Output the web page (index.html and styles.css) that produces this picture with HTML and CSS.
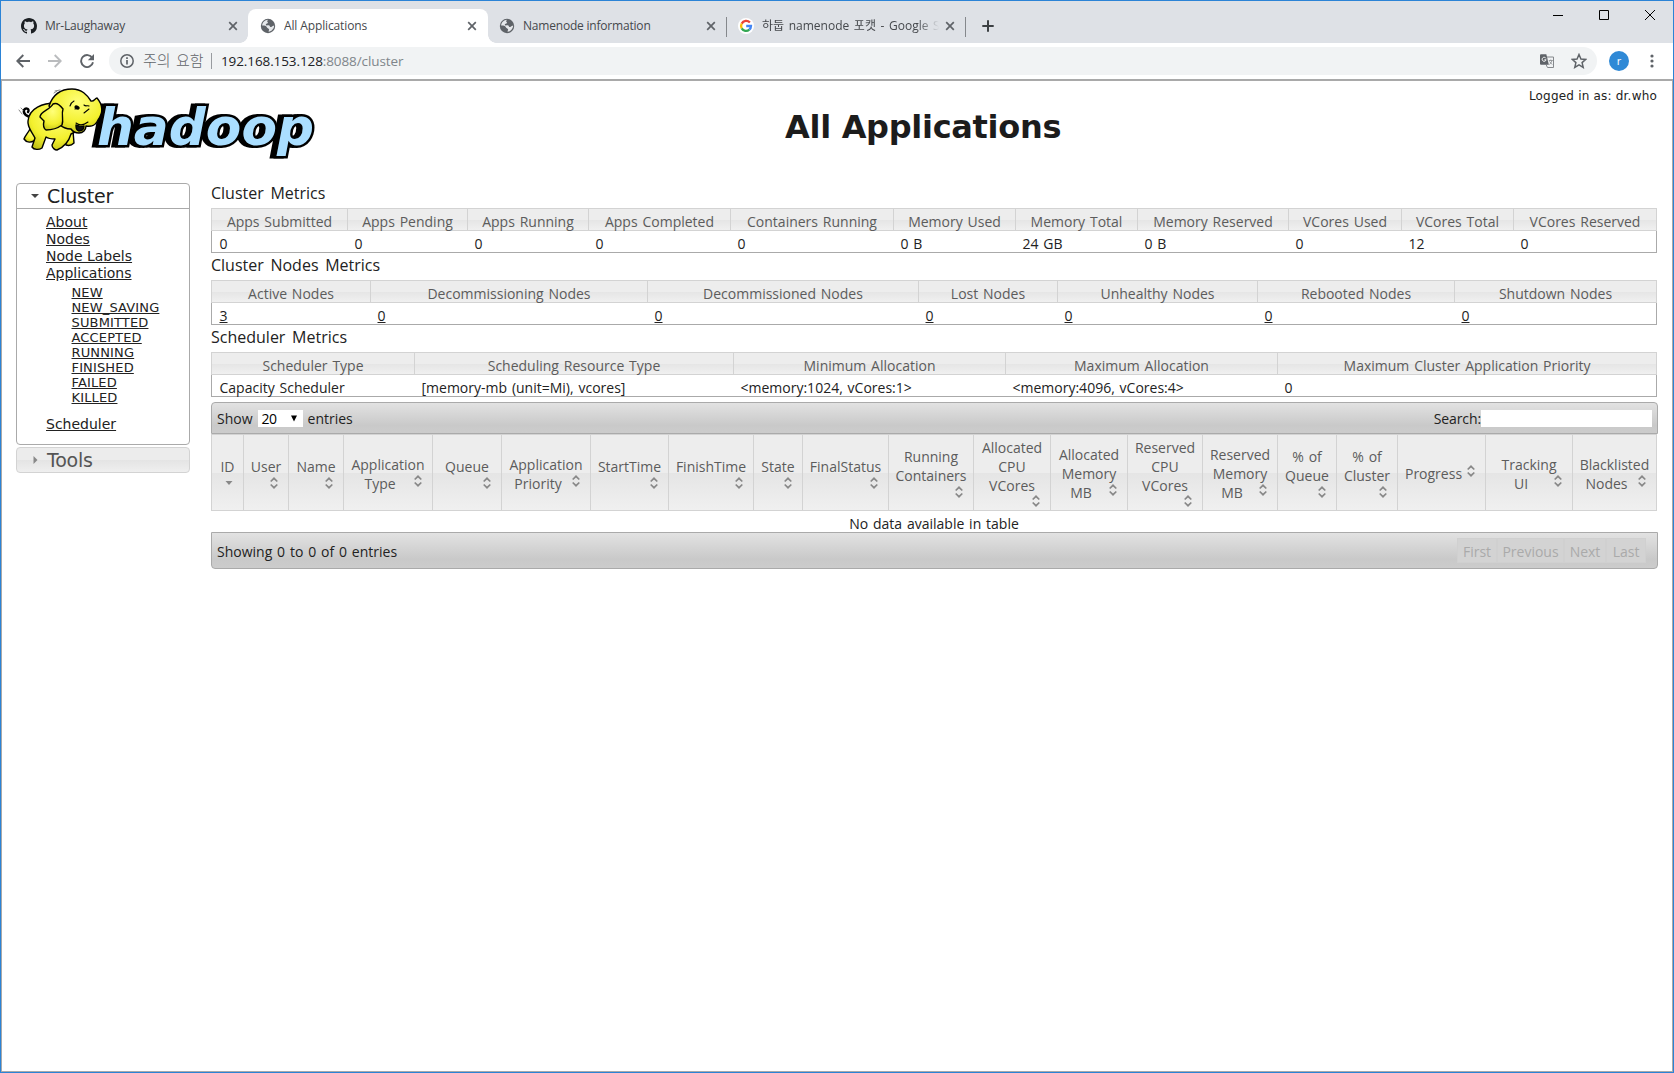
FILE: index.html
```html
<!DOCTYPE html>
<html lang="en">
<head>
<meta charset="utf-8">
<title>All Applications</title>
<link rel="stylesheet" href="styles.css">
</head>
<body>
<svg class="defs" aria-hidden="true">
  <defs>
    <symbol id="close" viewBox="0 0 10 10"><path d="M1.2 1.2l7.6 7.6M8.8 1.2L1.2 8.8" fill="none" stroke="#5f6368" stroke-width="1.7"/></symbol>
    <symbol id="globe" viewBox="0 0 16 16"><circle cx="8" cy="8" r="7.2" fill="#5f6368"/><path d="M8.2 1.8c-1 1-1.4 1.500-.6 2.300 1 .9-.5 1.600-1.500 1.900-.6.8-.2 1.500.9 1.400 1.700-.2 2.900.1 3 1.400 1 .6 2 .2 2.600-.9l1.600-.4c-.1 3-2.400 5.900-5.600 6.300-.1-1.100.6-1.500.5-2.600-.4-1.200-2-.9-2.400-2.300-.6-1.300-2.700-1.500-4.600-1.400C2.400 4.400 4.900 2 8.200 1.800z" fill="#e6e8eb"/></symbol>
    <symbol id="sort" viewBox="0 0 16 16"><path d="M4.700 6.500L8 3.300l3.300 3.200M4.700 9.500L8 12.700l3.300-3.200" fill="none" stroke="#888" stroke-width="1.700"/></symbol>
    <symbol id="sorted" viewBox="0 0 16 16"><path d="M4.500 6h7L8 10z" fill="#888"/></symbol>
  </defs>
</svg>
<div class="window">
  <header class="tabstrip">
    <div class="tab">
      <svg class="favicon" viewBox="0 0 16 16"><path fill="#1b1f23" d="M8 0C3.580 0 0 3.580 0 8c0 3.540 2.290 6.530 5.470 7.590.4.070.55-.17.55-.38 0-.19-.010-.82-.010-1.490-2.010.37-2.530-.49-2.690-.94-.09-.23-.48-.94-.82-1.130-.28-.15-.68-.52-.010-.53.63-.010 1.080.58 1.230.82.72 1.210 1.870.87 2.330.66.070-.52.28-.87.51-1.070-1.780-.2-3.640-.89-3.640-3.950 0-.87.31-1.590.82-2.150-.08-.2-.36-1.020.08-2.120 0 0 .67-.21 2.200.82.64-.18 1.320-.27 2-.27s1.360.09 2 .27c1.530-1.040 2.200-.82 2.200-.82.44 1.100.16 1.920.08 2.120.51.56.82 1.270.82 2.150 0 3.070-1.870 3.750-3.650 3.950.29.25.54.73.54 1.480 0 1.070-.010 1.930-.010 2.200 0 .21.150.46.550.38A8.010 8.010 0 0 0 16 8c0-4.420-3.580-8-8-8z"/></svg>
      <span class="tab-title">Mr-Laughaway</span>
      <svg class="close"><use href="#close"/></svg>
    </div>
    <div class="tab active">
      <svg class="favicon"><use href="#globe"/></svg>
      <span class="tab-title">All Applications</span>
      <svg class="close"><use href="#close"/></svg>
    </div>
    <div class="tab">
      <svg class="favicon"><use href="#globe"/></svg>
      <span class="tab-title">Namenode information</span>
      <svg class="close"><use href="#close"/></svg>
    </div>
    <div class="tab tab-last">
      <svg class="favicon" viewBox="0 0 16 16"><circle cx="8" cy="8" r="8" fill="#fff"/><g fill="none" stroke-width="2.300"><path d="M11.900 4.600A5 5 0 0 0 3.700 5.600" stroke="#ea4335"/><path d="M3.700 5.600a5 5 0 0 0 0 4.800" stroke="#fbbc05"/><path d="M3.700 10.400a5 5 0 0 0 7.600 1.300" stroke="#34a853"/><path d="M11.300 11.700A5 5 0 0 0 13 8H8.200" stroke="#4285f4"/></g></svg>
      <span class="tab-title fade">하둡 namenode 포캣 - Google S</span>
      <svg class="close"><use href="#close"/></svg>
    </div>
    <svg class="new-tab" viewBox="0 0 12 12"><path d="M6 .3v11.400M.3 6h11.400" stroke="#3c4043" stroke-width="2"/></svg>
    <div class="controls">
      <svg viewBox="0 0 10 10"><path d="M0 5.500h10" stroke="#000"/></svg>
      <svg viewBox="0 0 10 10"><path d="M.5.5h9v9h-9z" stroke="#000" fill="none"/></svg>
      <svg viewBox="0 0 10 10"><path d="M0 0l10 10M10 0L0 10" stroke="#000"/></svg>
    </div>
  </header>
  <nav class="toolbar">
    <svg class="nav back" viewBox="0 0 14 14"><path d="M14 7H1.500M7.300 1L1.300 7l6 6" fill="none" stroke="#5f6368" stroke-width="1.900"/></svg>
    <svg class="nav forward" viewBox="0 0 14 14"><path d="M0 7h12.500M6.700 1l6 6-6 6" fill="none" stroke="#babcbe" stroke-width="1.900"/></svg>
    <svg class="nav reload" viewBox="0 0 14 14"><path d="M12.300 4A6 6 0 1 0 13 8.300" fill="none" stroke="#5f6368" stroke-width="1.900"/><path d="M14 0v6.200H7.800z" fill="#5f6368"/></svg>
    <div class="omnibox">
      <svg class="info" viewBox="0 0 14 14"><circle cx="7" cy="7" r="6.200" fill="none" stroke="#5f6368" stroke-width="1.500"/><path d="M7 6v4.500M7 3.300v1.600" stroke="#5f6368" stroke-width="1.700"/></svg>
      <span class="warn">주의 요함</span>
      <span class="bar"></span>
      <span class="url">192.168.153.128<span>:8088/cluster</span></span>
      <svg class="translate" viewBox="0 0 14 14"><path d="M6 3h7.500v10.500H7.500L6 10.500" fill="#f1f3f4" stroke="#85888c"/><path d="M0 1.200Q0 .2 1 .2h5.300l2.600 10.600H1q-1 0-1-1z" fill="#5f6368"/><path d="M5.900 4.300a2 2 0 1 0 .2 1.500H4.400" fill="none" stroke="#fff"/><path d="M8.800 6.500h4M10.800 5.500v1M12 6.500q-.5 2.500-2.700 4M9.500 7.500l2.700 3" fill="none" stroke="#85888c" stroke-width=".8"/></svg>
      <svg class="star" viewBox="0 0 14 14"><path d="M7 1.300l1.700 3.900 4.200.4-3.200 2.800 1 4.200L7 10.400l-3.700 2.200 1-4.200L1.100 5.600l4.200-.4z" fill="none" stroke="#5f6368" stroke-width="1.300"/></svg>
    </div>
    <span class="avatar">r</span>
    <svg class="menu" viewBox="0 0 4 14"><g fill="#5f6368"><circle cx="2" cy="2" r="1.600"/><circle cx="2" cy="7" r="1.600"/><circle cx="2" cy="12" r="1.600"/></g></svg>
  </nav>
  <div class="page">
    <div class="masthead">
      <svg class="logo" viewBox="0 0 300 76" role="img">
        <defs>
          <radialGradient id="skin" cx=".55" cy=".3" r=".8"><stop offset="0" stop-color="#ffff7a"/><stop offset=".6" stop-color="#f3f02e"/><stop offset="1" stop-color="#b9b912"/></radialGradient>
        </defs>
        <text class="wordmark" x="79" y="58" textLength="217" lengthAdjust="spacingAndGlyphs">hadoop</text>
        <g stroke="#000" stroke-width="1.400" stroke-linejoin="round" stroke-linecap="round" fill="url(#skin)">
          <path d="M14 30C9 30 5 27 6 23c2-3 6-1 4 2" fill="none" stroke-width="2.400"/>
          <path d="M12 42c-2 4-5 7-6 10 2 3 6 4 10 2l5-10z"/>
          <path d="M45 45l3 13c3 1 6 0 8-2l-1-12z"/>
          <path d="M38 16C25 16 11 21 10 34c-1 6 4 11 7 17l-3 9c2 3 7 3 10 1l4-11c3 2 7 2 9 2l-3 6c0 3 3 5 5 5 7-3 12-9 14-16l8-4-4-24z"/>
          <path d="M31 19C35 7 44 2 54 2c10 0 15 6 19 12 3 1 4-3 6-3 6 7 6 15 1 22-2 5-7 7-12 6 0 4-3 7-7 7-3 0-6-1-8-4-5 0-9-2-12-5z"/>
          <path d="M35 17c-3 6-13 7-13 13l4 4c-1 4-1 7 2 9 6 0 12-2 16-5 2-6-1-10 1-16-3-4-6-7-10-5z"/>
          <path d="M58 38c3 1 5 2 8 1 0 3-2 5-5 5-3-1-3-3-3-6z" fill="#111"/>
          <path d="M52 19c1-3 2-4 4-5M57 22l4-1M66 18c2 2 3 0 5 1M66 26l5-4M58 36c4 3 8 2 12-1" fill="none" stroke-width="1.100"/>
          <ellipse cx="59" cy="20.500" rx="2" ry="1.300" fill="#000" transform="rotate(25 59 20.500)"/>
          <path d="M37 4l5-1M36 6l3-2M1 23l3 4M3 21l2 2" fill="none" stroke="#888" stroke-width="1"/>
        </g>
      </svg>
      <h1>All Applications</h1>
      <div class="login">Logged in as: dr.who</div>
    </div>
    <div class="columns">
      <aside>
        <section class="panel open">
          <h3><svg viewBox="0 0 8 8"><path d="M0 2h8L4 6z" fill="#444"/></svg>Cluster</h3>
          <ul>
            <li><a>About</a></li><li><a>Nodes</a></li><li><a>Node Labels</a></li>
            <li><a>Applications</a>
              <ul><li><a>NEW</a></li><li><a>NEW_SAVING</a></li><li><a>SUBMITTED</a></li><li><a>ACCEPTED</a></li><li><a>RUNNING</a></li><li><a>FINISHED</a></li><li><a>FAILED</a></li><li><a>KILLED</a></li></ul>
            </li>
            <li><a>Scheduler</a></li>
          </ul>
        </section>
        <section class="panel closed"><h3><svg viewBox="0 0 8 8"><path d="M2.500 0v8l4-4z" fill="#888"/></svg>Tools</h3></section>
      </aside>
      <main>
        <h4>Cluster Metrics</h4>
        <table class="metrics cluster">
          <colgroup><col><col><col><col><col><col><col><col><col><col><col></colgroup>
          <thead><tr><th>Apps Submitted</th><th>Apps Pending</th><th>Apps Running</th><th>Apps Completed</th><th>Containers Running</th><th>Memory Used</th><th>Memory Total</th><th>Memory Reserved</th><th>VCores Used</th><th>VCores Total</th><th>VCores Reserved</th></tr></thead>
          <tbody><tr><td>0</td><td>0</td><td>0</td><td>0</td><td>0</td><td>0 B</td><td>24 GB</td><td>0 B</td><td>0</td><td>12</td><td>0</td></tr></tbody>
        </table>
        <h4>Cluster Nodes Metrics</h4>
        <table class="metrics nodes">
          <colgroup><col><col><col><col><col><col><col></colgroup>
          <thead><tr><th>Active Nodes</th><th>Decommissioning Nodes</th><th>Decommissioned Nodes</th><th>Lost Nodes</th><th>Unhealthy Nodes</th><th>Rebooted Nodes</th><th>Shutdown Nodes</th></tr></thead>
          <tbody><tr><td><a>3</a></td><td><a>0</a></td><td><a>0</a></td><td><a>0</a></td><td><a>0</a></td><td><a>0</a></td><td><a>0</a></td></tr></tbody>
        </table>
        <h4>Scheduler Metrics</h4>
        <table class="metrics scheduler">
          <colgroup><col><col><col><col><col></colgroup>
          <thead><tr><th>Scheduler Type</th><th>Scheduling Resource Type</th><th>Minimum Allocation</th><th>Maximum Allocation</th><th>Maximum Cluster Application Priority</th></tr></thead>
          <tbody><tr><td>Capacity Scheduler</td><td>[memory-mb (unit=Mi), vcores]</td><td>&lt;memory:1024, vCores:1&gt;</td><td>&lt;memory:4096, vCores:4&gt;</td><td>0</td></tr></tbody>
        </table>
        <div class="strip top">
          <span>Show</span><span class="select">20<svg viewBox="0 0 6 7"><path d="M0 .5h6L3 6.500z"/></svg></span><span>entries</span>
          <label class="search">Search:<input type="text"></label>
        </div>
        <table class="apps">
          <colgroup><col><col><col><col><col><col><col><col><col><col><col><col><col><col><col><col><col><col><col><col></colgroup>
          <thead><tr>
            <th><div>ID<svg><use href="#sorted"/></svg></div></th>
            <th><div>User<svg><use href="#sort"/></svg></div></th>
            <th><div>Name<svg><use href="#sort"/></svg></div></th>
            <th><div>Application<br>Type<svg><use href="#sort"/></svg></div></th>
            <th><div>Queue<svg><use href="#sort"/></svg></div></th>
            <th><div>Application<br>Priority<svg><use href="#sort"/></svg></div></th>
            <th><div>StartTime<svg><use href="#sort"/></svg></div></th>
            <th><div>FinishTime<svg><use href="#sort"/></svg></div></th>
            <th><div>State<svg><use href="#sort"/></svg></div></th>
            <th><div>FinalStatus<svg><use href="#sort"/></svg></div></th>
            <th><div>Running<br>Containers<svg><use href="#sort"/></svg></div></th>
            <th><div>Allocated<br>CPU<br>VCores<svg class="below"><use href="#sort"/></svg></div></th>
            <th><div>Allocated<br>Memory<br>MB<svg><use href="#sort"/></svg></div></th>
            <th><div>Reserved<br>CPU<br>VCores<svg class="below"><use href="#sort"/></svg></div></th>
            <th><div>Reserved<br>Memory<br>MB<svg><use href="#sort"/></svg></div></th>
            <th><div>% of<br>Queue<svg><use href="#sort"/></svg></div></th>
            <th><div>% of<br>Cluster<svg><use href="#sort"/></svg></div></th>
            <th><div>Progress<svg><use href="#sort"/></svg></div></th>
            <th><div>Tracking<br>UI<svg><use href="#sort"/></svg></div></th>
            <th><div>Blacklisted<br>Nodes<svg><use href="#sort"/></svg></div></th>
          </tr></thead>
          <tbody><tr><td colspan="20">No data available in table</td></tr></tbody>
        </table>
        <div class="strip bottom">
          <span>Showing 0 to 0 of 0 entries</span>
          <div class="pager"><span>First</span><span>Previous</span><span>Next</span><span>Last</span></div>
        </div>
      </main>
    </div>
  </div>
</div>
</body>
</html>
```
FILE: styles.css
```css
* { box-sizing: border-box; }
body { margin: 0; font: 14px "Open Sans", "Noto Sans CJK KR", sans-serif; color: #222; }
.defs { position: absolute; width: 0; height: 0; }
svg { display: block; flex: none; }
.window { height: 1073px; border: 1px solid #2b83d6; display: flex; flex-direction: column; overflow: hidden; }

/* tab strip */
.tabstrip { height: 42px; background: #dee1e6; display: flex; padding-top: 8px; }
.tab { width: 239px; height: 34px; display: flex; align-items: center; padding: 0 10px 0 20px; position: relative; font-size: 12px; color: #45484c; }
.tab:first-child { width: 247px; padding-right: 9px; }
.tab.active { width: 240px; background: #fff; border-radius: 8px 8px 0 0; padding-left: 12px; }
.tab.active::before, .tab.active::after { content: ""; position: absolute; bottom: 0; width: 8px; height: 8px; }
.tab.active::before { left: -8px; background: radial-gradient(circle at 0 0, transparent 7.500px, #fff 8px); }
.tab.active::after { right: -8px; background: radial-gradient(circle at 100% 0, transparent 7.500px, #fff 8px); }
.tab.active ~ .tab { padding-left: 11px; }
.tab.active ~ .tab::after { content: ""; position: absolute; right: 0; top: 8px; width: 1px; height: 20px; background: #85888c; }
.tab.tab-last { padding-left: 10px; }
.favicon { width: 16px; height: 16px; margin-right: 8px; }
.tab-title { flex: 1; white-space: nowrap; overflow: hidden; line-height: 20px; letter-spacing: -.2px; }
.active .tab-title { letter-spacing: -.13px; }
.fade { margin-right: 6px; letter-spacing: 0; word-spacing: 1.500px; -webkit-mask-image: linear-gradient(90deg, #000 88%, transparent); mask-image: linear-gradient(90deg, #000 88%, transparent); }
.close { width: 10px; height: 10px; margin-right: 1px; }
.new-tab { width: 12px; height: 12px; margin: 11px 0 0 16px; }
.controls { margin-left: auto; display: flex; gap: 36px; padding-right: 18px; }
.controls svg { width: 10px; height: 10px; margin-top: 1px; }

/* toolbar */
.toolbar { height: 36px; flex: none; display: flex; align-items: center; background: #fff; }
.nav { width: 14px; height: 14px; }
.back { margin-left: 15px; }
.forward { margin-left: 18px; }
.reload { margin-left: 18px; }
.omnibox { margin-left: 15px; width: 1488px; height: 28px; border-radius: 14px; background: #f1f3f4; display: flex; align-items: center; padding-left: 11px; }
.info { width: 14px; height: 14px; margin-right: 9px; }
.warn { color: #5f6368; font: 300 15px/24px "Noto Sans CJK KR", sans-serif; width: 60px; white-space: nowrap; word-spacing: 2px; position: relative; top: -1px; }
.bar { width: 1px; height: 16px; background: #999ca0; margin: 0 9px 0 8px; }
.url { color: #202124; font-size: 13.500px; letter-spacing: -.1px; white-space: nowrap; }
.url span { color: #80868b; }
.translate { width: 14px; height: 14px; margin-left: auto; }
.star { width: 16px; height: 16px; margin: 0 10px 0 17px; }
.avatar { margin-left: 12px; width: 20px; height: 20px; border-radius: 50%; background: #2f89d6; color: #fff; font-size: 11px; line-height: 19px; text-align: center; }
.menu { width: 4px; height: 14px; margin-left: 20.500px; }

/* page */
.page { flex: 1; background: #fff; border: 1px solid #a9a9a9; border-width: 2px 1px 1px; }
.masthead { height: 102px; display: flex; position: relative; }
.logo { width: 300px; height: 76px; margin: 6px 0 0 16px; overflow: visible; }
.wordmark { font: italic bold 52px "DejaVu Sans", sans-serif; fill: #aadeff; stroke: #000; stroke-width: 5px; paint-order: stroke; filter: drop-shadow(-4px 0 0 #000); }
h1 { margin: 24px 0 0 467px; font: bold 32px/44px "DejaVu Sans", sans-serif; letter-spacing: -.3px; white-space: nowrap; color: #1c1c1c; width: 278px; }
.login { margin: 8px 15px 0 auto; font: 12px/15px "DejaVu Sans", sans-serif; letter-spacing: .2px; }
.columns { display: flex; padding-left: 14px; }
aside { width: 174px; flex: none; font-family: "DejaVu Sans", sans-serif; }
.panel { border: 1px solid #aaa; border-radius: 4px; }
.panel h3 { margin: 0; font-weight: normal; font-size: 19px; letter-spacing: -.2px; line-height: 24px; display: flex; align-items: center; }
.panel h3 svg { width: 8px; height: 8px; margin: 0 8px 0 14px; }
.open { height: 262px; }
.open h3 { border-bottom: 1px solid #aaa; height: 25px; }
.closed { margin-top: 2px; border-color: #d3d3d3; height: 26px; background: linear-gradient(#ececec 50%, #e4e4e4 50%, #efefef); }
.closed h3 { color: #555; }
.panel ul { list-style: none; margin: 0; padding: 5px 0 0 29px; font-size: 14px; line-height: 17px; }
.panel ul ul { padding: 3px 0 11px 25.500px; font-size: 13px; line-height: 15px; letter-spacing: .15px; }
a { text-decoration: underline; }
main { width: 1447px; margin-left: 21px; }
h4 { margin: 0; font-size: 16px; font-weight: normal; height: 25px; line-height: 21px; word-spacing: 2.500px; }
h4:not(:first-child) { height: 27px; line-height: 25px; }
table { table-layout: fixed; border-collapse: separate; border-spacing: 0; width: 1446px; }
th, td { padding: 0; font-weight: normal; white-space: nowrap; word-spacing: 1.200px; }
th { color: #5c5c5c; border: 0 solid #d3d3d3; border-width: 1px 0 1px 1px; background: linear-gradient(#ededed 50%, #e5e5e5 51%, #f0f0f0); }
th:last-child { border-right-width: 1px; }
.metrics th { height: 23px; line-height: 17px; padding-top: 4px; }
.metrics td { height: 22px; line-height: 17px; padding: 4px 0 0 7.500px; border-bottom: 1px solid #aaa; }
.metrics td:first-child { border-left: 1px solid #aaa; }
.metrics td:last-child { border-right: 1px solid #aaa; }
.cluster col:nth-child(1) { width: 136px; }
.cluster col:nth-child(2) { width: 120px; }
.cluster col:nth-child(3) { width: 121px; }
.cluster col:nth-child(4) { width: 142px; }
.cluster col:nth-child(5) { width: 163px; }
.cluster col:nth-child(6) { width: 122px; }
.cluster col:nth-child(7) { width: 122px; }
.cluster col:nth-child(8) { width: 151px; }
.cluster col:nth-child(9) { width: 113px; }
.cluster col:nth-child(10) { width: 112px; }
.nodes col:nth-child(1) { width: 159px; }
.nodes col:nth-child(2) { width: 277px; }
.nodes col:nth-child(3) { width: 271px; }
.nodes col:nth-child(4) { width: 139px; }
.nodes col:nth-child(5) { width: 200px; }
.nodes col:nth-child(6) { width: 197px; }
.scheduler col:nth-child(1) { width: 203px; }
.scheduler col:nth-child(2) { width: 319px; }
.scheduler col:nth-child(3) { width: 272px; }
.scheduler col:nth-child(4) { width: 272px; }

/* list of applications */
.strip { width: 1447px; border: 1px solid #aaa; background: linear-gradient(#e2e2e2, #c9c9c9 75%, #cccccc); display: flex; align-items: center; padding-left: 5px; word-spacing: 1.200px; }
.top { margin-top: 5px; height: 32px; border-radius: 4px 4px 0 0; padding-top: 1px; }
.select { background: #fff; width: 45px; height: 17px; margin: 0 5px; padding: 0 6px 0 4px; display: flex; align-items: center; justify-content: space-between; color: #000; line-height: 17px; letter-spacing: -.5px; }
.select svg { width: 6px; height: 7px; }
.search { margin-left: auto; display: flex; align-items: center; padding-right: 5px; letter-spacing: -.1px; }
.search input { width: 171px; height: 17px; border: 0; padding: 0; background: #fff; }
.apps th { height: 77px; line-height: 19px; padding: 0 6.500px 0 6.500px; }
.apps th div { display: flow-root; padding-top: 2px; }
.apps th svg { float: right; width: 16px; height: 16px; margin-top: -1px; }
.apps th svg.below { margin-left: 8px; margin-top: -2px; }
.apps td { height: 20px; text-align: center; line-height: 17px; padding: 4px 0 0; }
.apps col:nth-child(1) { width: 32px; }
.apps col:nth-child(2) { width: 45px; }
.apps col:nth-child(3) { width: 55px; }
.apps col:nth-child(4) { width: 89px; }
.apps col:nth-child(5) { width: 69px; }
.apps col:nth-child(6) { width: 89px; }
.apps col:nth-child(7) { width: 78px; }
.apps col:nth-child(8) { width: 85px; }
.apps col:nth-child(9) { width: 49px; }
.apps col:nth-child(10) { width: 86px; }
.apps col:nth-child(11) { width: 85px; }
.apps col:nth-child(12) { width: 77px; }
.apps col:nth-child(13) { width: 77px; }
.apps col:nth-child(14) { width: 75px; }
.apps col:nth-child(15) { width: 75px; }
.apps col:nth-child(16) { width: 59px; }
.apps col:nth-child(17) { width: 61px; }
.apps col:nth-child(18) { width: 88px; }
.apps col:nth-child(19) { width: 87px; }
.bottom { height: 37px; border-radius: 0 0 4px 4px; padding-top: 2px; }
.pager { margin: -3px 11px 0 auto; display: flex; color: #aaa; }
.pager span { height: 25px; line-height: 26px; border: 1px solid #d0d0d0; background: #d3d3d3; text-align: center; }
.pager span:nth-child(1) { width: 40px; }
.pager span:nth-child(2) { width: 67px; }
.pager span:nth-child(3) { width: 42px; }
.pager span:nth-child(4) { width: 40px; }
```
